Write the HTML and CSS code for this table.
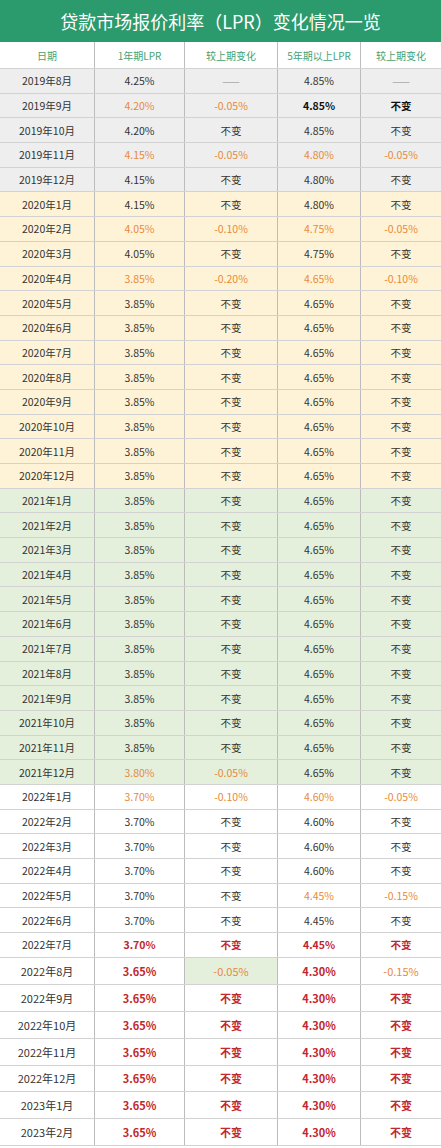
FILE: index.html
```html
<!DOCTYPE html>
<html lang="zh">
<head>
<meta charset="utf-8">
<link rel="stylesheet" href="styles.css">
</head>
<body>
<div class="sheet">
  <div class="title">贷款市场报价利率（LPR）变化情况一览</div>
  <div class="row head">
    <div>日期</div><div>1年期LPR</div><div>较上期变化</div><div>5年期以上LPR</div><div>较上期变化</div>
  </div>

  <div class="row y19"><div>2019年8月</div><div>4.25%</div><div class="dash">——</div><div>4.85%</div><div class="dash">——</div></div>
  <div class="row y19"><div>2019年9月</div><div class="o">4.20%</div><div class="o">-0.05%</div><div class="b">4.85%</div><div class="b">不变</div></div>
  <div class="row y19"><div>2019年10月</div><div>4.20%</div><div>不变</div><div>4.85%</div><div>不变</div></div>
  <div class="row y19"><div>2019年11月</div><div class="o">4.15%</div><div class="o">-0.05%</div><div class="o">4.80%</div><div class="o">-0.05%</div></div>
  <div class="row y19"><div>2019年12月</div><div>4.15%</div><div>不变</div><div>4.80%</div><div>不变</div></div>

  <div class="row y20"><div>2020年1月</div><div>4.15%</div><div>不变</div><div>4.80%</div><div>不变</div></div>
  <div class="row y20"><div>2020年2月</div><div class="o">4.05%</div><div class="o">-0.10%</div><div class="o">4.75%</div><div class="o">-0.05%</div></div>
  <div class="row y20"><div>2020年3月</div><div>4.05%</div><div>不变</div><div>4.75%</div><div>不变</div></div>
  <div class="row y20"><div>2020年4月</div><div class="o">3.85%</div><div class="o">-0.20%</div><div class="o">4.65%</div><div class="o">-0.10%</div></div>
  <div class="row y20"><div>2020年5月</div><div>3.85%</div><div>不变</div><div>4.65%</div><div>不变</div></div>
  <div class="row y20"><div>2020年6月</div><div>3.85%</div><div>不变</div><div>4.65%</div><div>不变</div></div>
  <div class="row y20"><div>2020年7月</div><div>3.85%</div><div>不变</div><div>4.65%</div><div>不变</div></div>
  <div class="row y20"><div>2020年8月</div><div>3.85%</div><div>不变</div><div>4.65%</div><div>不变</div></div>
  <div class="row y20"><div>2020年9月</div><div>3.85%</div><div>不变</div><div>4.65%</div><div>不变</div></div>
  <div class="row y20"><div>2020年10月</div><div>3.85%</div><div>不变</div><div>4.65%</div><div>不变</div></div>
  <div class="row y20"><div>2020年11月</div><div>3.85%</div><div>不变</div><div>4.65%</div><div>不变</div></div>
  <div class="row y20"><div>2020年12月</div><div>3.85%</div><div>不变</div><div>4.65%</div><div>不变</div></div>

  <div class="row y21"><div>2021年1月</div><div>3.85%</div><div>不变</div><div>4.65%</div><div>不变</div></div>
  <div class="row y21"><div>2021年2月</div><div>3.85%</div><div>不变</div><div>4.65%</div><div>不变</div></div>
  <div class="row y21"><div>2021年3月</div><div>3.85%</div><div>不变</div><div>4.65%</div><div>不变</div></div>
  <div class="row y21"><div>2021年4月</div><div>3.85%</div><div>不变</div><div>4.65%</div><div>不变</div></div>
  <div class="row y21"><div>2021年5月</div><div>3.85%</div><div>不变</div><div>4.65%</div><div>不变</div></div>
  <div class="row y21"><div>2021年6月</div><div>3.85%</div><div>不变</div><div>4.65%</div><div>不变</div></div>
  <div class="row y21"><div>2021年7月</div><div>3.85%</div><div>不变</div><div>4.65%</div><div>不变</div></div>
  <div class="row y21"><div>2021年8月</div><div>3.85%</div><div>不变</div><div>4.65%</div><div>不变</div></div>
  <div class="row y21"><div>2021年9月</div><div>3.85%</div><div>不变</div><div>4.65%</div><div>不变</div></div>
  <div class="row y21"><div>2021年10月</div><div>3.85%</div><div>不变</div><div>4.65%</div><div>不变</div></div>
  <div class="row y21"><div>2021年11月</div><div>3.85%</div><div>不变</div><div>4.65%</div><div>不变</div></div>
  <div class="row y21"><div>2021年12月</div><div class="o">3.80%</div><div class="o">-0.05%</div><div>4.65%</div><div>不变</div></div>

  <div class="row y22"><div>2022年1月</div><div class="o">3.70%</div><div class="o">-0.10%</div><div class="o">4.60%</div><div class="o">-0.05%</div></div>
  <div class="row y22"><div>2022年2月</div><div>3.70%</div><div>不变</div><div>4.60%</div><div>不变</div></div>
  <div class="row y22"><div>2022年3月</div><div>3.70%</div><div>不变</div><div>4.60%</div><div>不变</div></div>
  <div class="row y22"><div>2022年4月</div><div>3.70%</div><div>不变</div><div>4.60%</div><div>不变</div></div>
  <div class="row y22"><div>2022年5月</div><div>3.70%</div><div>不变</div><div class="o">4.45%</div><div class="o">-0.15%</div></div>
  <div class="row y22"><div>2022年6月</div><div>3.70%</div><div>不变</div><div>4.45%</div><div>不变</div></div>
  <div class="row y22"><div>2022年7月</div><div class="r">3.70%</div><div class="r">不变</div><div class="r">4.45%</div><div class="r">不变</div></div>

  <div class="row tall"><div>2022年8月</div><div class="r">3.65%</div><div class="o hl">-0.05%</div><div class="r">4.30%</div><div class="o">-0.15%</div></div>
  <div class="row tall"><div>2022年9月</div><div class="r">3.65%</div><div class="r">不变</div><div class="r">4.30%</div><div class="r">不变</div></div>
  <div class="row tall"><div>2022年10月</div><div class="r">3.65%</div><div class="r">不变</div><div class="r">4.30%</div><div class="r">不变</div></div>
  <div class="row tall"><div>2022年11月</div><div class="r">3.65%</div><div class="r">不变</div><div class="r">4.30%</div><div class="r">不变</div></div>
  <div class="row tall"><div>2022年12月</div><div class="r">3.65%</div><div class="r">不变</div><div class="r">4.30%</div><div class="r">不变</div></div>
  <div class="row tall"><div>2023年1月</div><div class="r">3.65%</div><div class="r">不变</div><div class="r">4.30%</div><div class="r">不变</div></div>
  <div class="row tall"><div>2023年2月</div><div class="r">3.65%</div><div class="r">不变</div><div class="r">4.30%</div><div class="r">不变</div></div>
</div>
</body>
</html>
```

FILE: styles.css
```css
html, body {
  margin: 0;
  padding: 0;
  background: #ffffff;
}
.sheet {
  width: 441px;
  font-family: "Noto Sans CJK SC", "Noto Sans", sans-serif;
  color: #333333;
}
.title {
  height: 42px;
  background: #2b9a6c;
  color: #ffffff;
  font-size: 18px;
  line-height: 42px;
  text-align: center;
}
.row {
  display: grid;
  grid-template-columns: 95px 90px 93px 83px 80px;
  height: 24.7px;
  box-sizing: border-box;
  border-bottom: 1px solid #d2d2d2;
  font-size: 10.5px;
}
.row > div {
  display: flex;
  align-items: center;
  justify-content: center;
  border-right: 1px solid #bcbcbc;
  white-space: nowrap;
}
.row > div:last-child {
  border-right: none;
}
.head {
  height: 27px;
  background: #ffffff;
  color: #45a274;
  font-size: 10px;
}
.y19 { background: #eeeeee; }
.y20 { background: #fff3d7; }
.y21 { background: #e4efdc; }
.y22 { background: #ffffff; }
.tall {
  height: 26.95px;
  background: #ffffff;
  font-size: 11px;
}
.o { color: #e8893c; }
.b { color: #111111; font-weight: 700; }
.r { color: #c2262e; font-weight: 700; }
.hl { background: #e4efdc; }
.dash { color: #a8a8a8; }
```
